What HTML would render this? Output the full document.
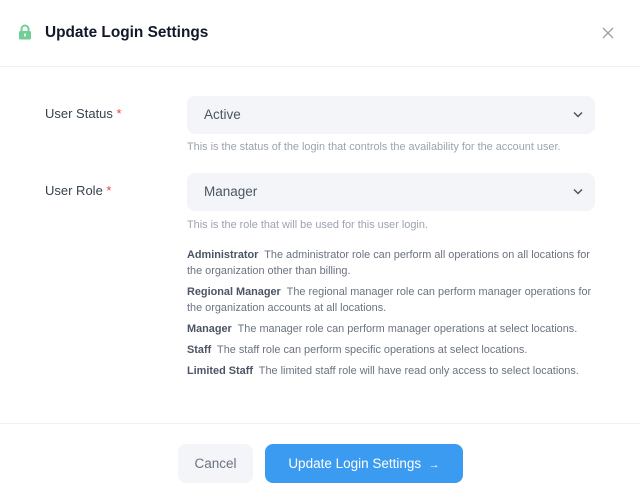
<!DOCTYPE html>
<html><head><style>
*{margin:0;padding:0;box-sizing:border-box}
body{width:640px;height:500px;background:#fff;font-family:"Liberation Sans",sans-serif;position:relative;overflow:hidden;color:#1f2937}
.abs{position:absolute}
.hdr{left:0;top:0;width:640px;height:67px;border-bottom:1px solid #eef0f3}
.title{left:45px;top:24px;font-size:15.4px;font-weight:bold;color:#111827}
.lbl{left:45px;font-size:13px;color:#374151}
.lbl span{color:#ef4444}
.sel{left:187px;width:408px;height:38px;background:#f3f5f8;border-radius:8px;font-size:13.5px;color:#4b5563;padding:11px 17px}
.help{left:187px;font-size:10.9px;color:#9ca3af}
.roles{left:187px;top:247px;width:414px;font-size:10.9px;color:#6b7280;line-height:16px}
.roles p{margin-bottom:5px}
.roles b{color:#4b5563}
.foot{left:0;top:423px;width:640px;border-top:1px solid #eef0f3}
.btn{top:444px;height:39px;border-radius:8px;font-size:13.5px;text-align:center;line-height:39px}
</style></head><body>
<div class="abs hdr"></div>
<svg class="abs" style="left:18px;top:24px" width="14" height="16" viewBox="0 0 14 16"><path d="M3.5 7V5a3.5 3.5 0 0 1 7 0v2" stroke="#6fcf97" stroke-width="2" fill="none"/><rect x="1" y="7" width="12" height="8.5" rx="1.5" fill="#6fcf97"/><rect x="6.2" y="9.5" width="1.6" height="3" fill="#fff"/></svg>
<div class="abs title">Update Login Settings</div>
<svg class="abs" style="left:602px;top:27px" width="12" height="12" viewBox="0 0 12 12"><path d="M1 1L11 11M11 1L1 11" stroke="#9ca3af" stroke-width="1.4"/></svg>
<div class="abs lbl" style="top:106px">User Status <span>*</span></div>
<div class="abs sel" style="top:96px">Active</div>
<svg class="abs" style="left:573px;top:111px" width="10" height="7" viewBox="0 0 10 7"><path d="M1 1.5L5 5.5L9 1.5" stroke="#4b5563" stroke-width="1.5" fill="none"/></svg>
<div class="abs help" style="top:141px">This is the status of the login that controls the availability for the account user.</div>
<div class="abs lbl" style="top:183px">User Role <span>*</span></div>
<div class="abs sel" style="top:173px">Manager</div>
<svg class="abs" style="left:573px;top:188px" width="10" height="7" viewBox="0 0 10 7"><path d="M1 1.5L5 5.5L9 1.5" stroke="#4b5563" stroke-width="1.5" fill="none"/></svg>
<div class="abs help" style="top:219px">This is the role that will be used for this user login.</div>
<div class="abs roles">
<p><b>Administrator</b>&nbsp; The administrator role can perform all operations on all locations for the organization other than billing.</p>
<p><b>Regional Manager</b>&nbsp; The regional manager role can perform manager operations for the organization accounts at all locations.</p>
<p><b>Manager</b>&nbsp; The manager role can perform manager operations at select locations.</p>
<p><b>Staff</b>&nbsp; The staff role can perform specific operations at select locations.</p>
<p><b>Limited Staff</b>&nbsp; The limited staff role will have read only access to select locations.</p>
</div>
<div class="abs foot"></div>
<div class="abs btn" style="left:178px;width:75px;background:#f3f5f8;color:#6b7280">Cancel</div>
<div class="abs btn" style="left:265px;width:198px;background:#3b9bf0;color:#fff">Update Login Settings &nbsp;<span style="font-size:11px">→</span></div>
</body></html>
